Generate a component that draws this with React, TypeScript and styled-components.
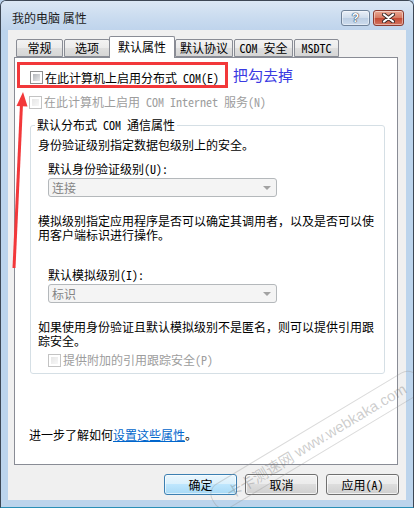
import React from 'react';
import styled, { createGlobalStyle } from 'styled-components';

const FONT = `"Noto Sans Mono CJK SC", "Noto Sans CJK SC", "Liberation Mono", monospace`;

const GlobalStyle = createGlobalStyle`
  html, body { margin: 0; padding: 0; }
  body {
    background: #b9d1ea;
    font-family: ${FONT};
    font-size: 12px;
    color: #000;
  }
  * { box-sizing: border-box; }
`;

const Window = styled.div`
  position: relative;
  width: 414px;
  height: 508px;
  display: flex;
  flex-direction: column;
  background: #bcd4ec;
  border: 1px solid #3d4754;
  border-bottom-color: #2a8fb6;
  border-radius: 6px 6px 0 0;
  overflow: hidden;
`;

const TitleBar = styled.div`
  height: 29px;
  flex-shrink: 0;
  display: flex;
  align-items: center;
  padding: 0 9px 0 11px;
  background: linear-gradient(#dbe7f4, #c9dbef 60%, #bfd4ec);
`;

const Title = styled.span`
  flex: 1;
  font-family: "Noto Sans CJK SC", sans-serif;
  font-size: 12px;
  line-height: 14px;
  color: #1c1c1c;
  padding-top: 4px;
`;

const CaptionGroup = styled.div`
  align-self: flex-start;
  margin-top: 9px;
  display: flex;
  gap: 3px;
`;

const CaptionButton = styled.div<{ $close?: boolean }>`
  width: ${p => (p.$close ? 31 : 29)}px;
  height: 16px;
  border-radius: 3px;
  display: flex;
  align-items: center;
  justify-content: center;
  border: 1px solid ${p => (p.$close ? '#8b3b30' : '#6f8299')};
  background: ${p =>
    p.$close
      ? 'linear-gradient(#eba893, #d67a63 48%, #c44a34 52%, #d27560)'
      : 'linear-gradient(#eaf0f8, #d0ddec 48%, #bccee3 52%, #cddcee)'};
  box-shadow: inset 0 0 0 1px rgba(255, 255, 255, 0.45);
  color: #fff;
  font-family: "Liberation Sans", sans-serif;
  font-weight: bold;
  font-size: 12px;
  text-shadow: 0 0 1px #2c3e55, 0 0 1px #2c3e55, 0 0 1px #2c3e55;
`;

const Client = styled.div`
  flex: 1;
  margin: 0 7px 7px 7px;
  background: #f0f0f0;
  padding: 6px 8px 0 6px;
  display: flex;
  flex-direction: column;
`;

const TabStrip = styled.div`
  height: 21px;
  display: flex;
  align-items: flex-end;
  padding-left: 2px;
  gap: 1px;
`;

const Tab = styled.div<{ $w: number; $active?: boolean }>`
  position: relative;
  width: ${p => p.$w}px;
  height: ${p => (p.$active ? 22 : 18)}px;
  margin: ${p => (p.$active ? '0 -1px -1px -2px' : '0')};
  z-index: ${p => (p.$active ? 1 : 0)};
  border: 1px solid #898c95;
  border-bottom: ${p => (p.$active ? 'none' : '1px solid #898c95')};
  border-radius: 2px 2px 0 0;
  background: ${p =>
    p.$active ? '#fff' : 'linear-gradient(#f3f3f3, #ebebeb 50%, #dfdfdf 50%, #d6d6d6)'};
  display: flex;
  align-items: ${p => (p.$active ? 'flex-start' : 'center')};
  justify-content: center;
  padding-top: ${p => (p.$active ? '3px' : '0')};
  line-height: 14px;
  white-space: nowrap;
`;

const Panel = styled.div`
  height: 408px;
  border: 1px solid #898c95;
  background: #fff;
  display: flex;
  flex-direction: column;
  align-items: flex-start;
`;

const AnnotatedRow = styled.div`
  margin: 4px 0 0 2px;
  display: flex;
  align-items: center;
`;

const RedFrame = styled.div`
  width: 211px;
  height: 26px;
  border: 3px solid #f2383a;
  padding: 5px 0 0 10px;
  display: flex;
  align-items: center;
`;

const Note = styled.span`
  margin-left: 5px;
  font-family: "Noto Sans CJK SC", sans-serif;
  font-size: 15px;
  line-height: 18px;
  color: #3a3ae2;
`;

const CheckRow = styled.label<{ $disabled?: boolean; $indent?: number; $top?: number }>`
  display: flex;
  align-items: center;
  gap: 2px;
  margin: ${p => p.$top ?? 0}px 0 0 ${p => p.$indent ?? 0}px;
  line-height: 14px;
  color: ${p => (p.$disabled ? '#9d9d9d' : '#000')};
  white-space: nowrap;
`;

const Box = styled.span<{ $disabled?: boolean }>`
  width: 13px;
  height: 13px;
  flex-shrink: 0;
  border: 1px solid ${p => (p.$disabled ? '#c3c3c3' : '#8e8f8f')};
  padding: 2px;
  background: #fff;
  &::after {
    content: '';
    display: block;
    width: 100%;
    height: 100%;
    background: ${p =>
      p.$disabled
        ? 'linear-gradient(135deg, #e6e6e6, #f7f7f7)'
        : 'linear-gradient(135deg, #b3b6ba, #e9eaeb)'};
  }
`;

const Group = styled.fieldset`
  margin: 9px 12px 0 15px;
  align-self: stretch;
  min-width: 0;
  border: 1px solid #d5dfe5;
  border-radius: 3px;
  padding: 0 4px 6px 7px;
`;

const Legend = styled.legend`
  padding: 0 2px;
  margin-left: -3px;
  line-height: 14px;
`;

const Para = styled.p<{ $top: number }>`
  margin: ${p => p.$top}px 0 0 0;
  line-height: 14px;
`;

const FieldLabel = styled.div<{ $top: number }>`
  margin: ${p => p.$top}px 0 0 10px;
  line-height: 14px;
`;

const Select = styled.div`
  margin: 2px 0 0 10px;
  width: 229px;
  height: 19px;
  border: 1px solid #b4b8bb;
  border-radius: 3px;
  background: #f4f4f4;
  color: #848484;
  display: flex;
  align-items: center;
  justify-content: space-between;
  padding: 0 5px 0 3px;
  line-height: 14px;
`;

const Arrow = styled.span`
  width: 0;
  height: 0;
  border-left: 4px solid transparent;
  border-right: 4px solid transparent;
  border-top: 4px solid #a2a2a2;
`;

const HelpLine = styled.div`
  margin: 54px 0 0 14px;
  line-height: 14px;
`;

const Link = styled.a`
  color: #0066cc;
  text-decoration: underline;
  cursor: pointer;
`;

const ButtonRow = styled.div`
  margin-top: 9px;
  margin-right: -1px;
  display: flex;
  justify-content: flex-end;
  gap: 8px;
`;

const Button = styled.button<{ $default?: boolean }>`
  width: 73px;
  height: 21px;
  padding: 0;
  font-family: ${FONT};
  font-size: 12px;
  line-height: 14px;
  color: #000;
  border-radius: 3px;
  border: 1px solid ${p => (p.$default ? '#3c7fb1' : '#707070')};
  background: ${p =>
    p.$default
      ? 'linear-gradient(#eaf6fd, #d9f0fc 50%, #bee6fd 50%, #a7d9f5)'
      : 'linear-gradient(#f2f2f2, #ebebeb 50%, #dddddd 50%, #cfcfcf)'};
  box-shadow: inset 0 0 0 1px ${p => (p.$default ? 'rgba(255,255,255,0.6)' : 'rgba(255,255,255,0.7)')};
`;

const Overlay = styled.svg`
  position: absolute;
  left: -1px;
  top: -1px;
  pointer-events: none;
`;

const Watermark = styled.div`
  position: absolute;
  left: 195px;
  top: 425px;
  width: 240px;
  height: 28px;
  transform: rotate(-31deg);
  border: 1px solid rgba(150, 150, 150, 0.35);
  border-radius: 12px;
  display: flex;
  align-items: center;
  justify-content: center;
  gap: 4px;
  color: rgba(110, 110, 110, 0.35);
  font-family: "Liberation Sans", "Noto Sans CJK SC", sans-serif;
  font-size: 15px;
  white-space: nowrap;
  pointer-events: none;
`;

const tabs = [
  { label: '常规', w: 47 },
  { label: '选项', w: 46 },
  { label: '默认属性', w: 66, active: true },
  { label: '默认协议', w: 58 },
  { label: 'COM 安全', w: 59 },
  { label: 'MSDTC', w: 45 },
];

const App: React.FC = () => {
  return (
    <>
      <GlobalStyle />
      <Window>
        <TitleBar>
          <Title>我的电脑 属性</Title>
          <CaptionGroup>
            <CaptionButton>?</CaptionButton>
            <CaptionButton $close>
              <svg width="13" height="10" viewBox="0 0 13 10">
                <path d="M2 1.5 L11 8.5 M11 1.5 L2 8.5" stroke="#3b2a28" strokeWidth="4" strokeLinecap="round" />
                <path d="M2 1.5 L11 8.5 M11 1.5 L2 8.5" stroke="#fff" strokeWidth="2.2" strokeLinecap="round" />
              </svg>
            </CaptionButton>
          </CaptionGroup>
        </TitleBar>

        <Client>
          <TabStrip>
            {tabs.map(t => (
              <Tab key={t.label} $w={t.w} $active={t.active}>
                {t.label}
              </Tab>
            ))}
          </TabStrip>

          <Panel>
            <AnnotatedRow>
              <RedFrame>
                <CheckRow>
                  <Box />
                  在此计算机上启用分布式 COM(E)
                </CheckRow>
              </RedFrame>
              <Note>把勾去掉</Note>
            </AnnotatedRow>

            <CheckRow $disabled $indent={14} $top={7}>
              <Box $disabled />
              在此计算机上启用 COM Internet 服务(N)
            </CheckRow>

            <Group>
              <Legend>默认分布式 COM 通信属性</Legend>
              <Para $top={6}>身份验证级别指定数据包级别上的安全。</Para>
              <FieldLabel $top={10}>默认身份验证级别(U):</FieldLabel>
              <Select>
                <span>连接</span>
                <Arrow />
              </Select>
              <Para $top={17}>
                模拟级别指定应用程序是否可以确定其调用者，以及是否可以使用客户端标识进行操作。
              </Para>
              <FieldLabel $top={26}>默认模拟级别(I):</FieldLabel>
              <Select>
                <span>标识</span>
                <Arrow />
              </Select>
              <Para $top={17}>
                如果使用身份验证且默认模拟级别不是匿名，则可以提供引用跟踪安全。
              </Para>
              <CheckRow $disabled $indent={10} $top={5}>
                <Box $disabled />
                提供附加的引用跟踪安全(P)
              </CheckRow>
            </Group>

            <HelpLine>
              进一步了解如何<Link>设置这些属性</Link>。
            </HelpLine>
          </Panel>

          <ButtonRow>
            <Button $default>确定</Button>
            <Button>取消</Button>
            <Button>应用(A)</Button>
          </ButtonRow>
        </Client>

        <Overlay width="60" height="290" viewBox="0 0 60 290">
          <path d="M14 268 L21.5 104" stroke="#f2383a" strokeWidth="3" fill="none" />
          <path d="M23 92 L16.5 106 L27.5 106.5 Z" fill="#f2383a" />
        </Overlay>

        <Watermark>
          <span>卡卡测速网</span>
          <span>www.webkaka.com</span>
        </Watermark>
      </Window>
    </>
  );
};

export default App;
